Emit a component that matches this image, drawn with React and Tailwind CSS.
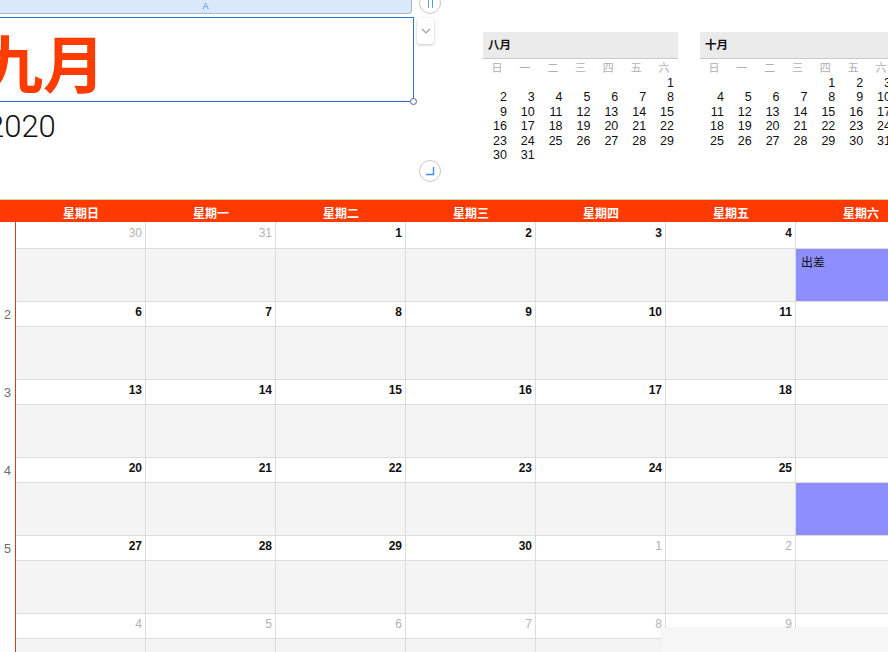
import React from 'react';

const weekdays = ['星期日', '星期一', '星期二', '星期三', '星期四', '星期五', '星期六'];
const miniHeads = ['日', '一', '二', '三', '四', '五', '六'];

// each week: [day, isOtherMonth]; null = nothing shown (saturday cells are blank)
const weeks = [
  { no: '', days: [[30, 1], [31, 1], [1], [2], [3], [4], null], event: '出差' },
  { no: '2', days: [[6], [7], [8], [9], [10], [11], null] },
  { no: '3', days: [[13], [14], [15], [16], [17], [18], null] },
  { no: '4', days: [[20], [21], [22], [23], [24], [25], null], event: '' },
  { no: '5', days: [[27], [28], [29], [30], [1, 1], [2, 1], null] },
  { no: '', days: [[4, 1], [5, 1], [6, 1], [7, 1], [8, 1], [9, 1], null] },
];

const buildMonth = (offset, count) => {
  const cells = [];
  for (let i = 0; i < offset; i++) cells.push('');
  for (let d = 1; d <= count; d++) cells.push(d);
  return cells;
};

const MiniMonth = ({ title, offset, count }) => {
  const cells = buildMonth(offset, count);
  return (
    <div className="w-[195px] shrink-0">
      <div className="h-[27px] bg-[#ebebeb] border-b border-[#c9c9c9] flex items-center pl-[5px] pt-[2px] text-[11.5px] font-semibold text-[#111]">
        {title}
      </div>
      <div className="grid grid-cols-7 mt-[3px] h-[13px] text-[11px] leading-[13px] text-[#b0b0b0]">
        {miniHeads.map((h) => (
          <div key={h} className="text-center">{h}</div>
        ))}
      </div>
      <div className="grid grid-cols-7 mt-[1px] text-[12.5px] leading-[14.4px] text-[#111]">
        {cells.map((c, i) => (
          <div key={i} className="text-right pr-[4px] h-[14.4px]">{c}</div>
        ))}
      </div>
    </div>
  );
};

const App = () => {
  return (
    <div className="relative w-[888px] h-[652px] overflow-hidden bg-white font-['Liberation_Sans','Noto_Sans_CJK_SC',sans-serif]">
      {/* top area */}
      <div className="flex h-[199px]">
        <div className="relative w-[483px] shrink-0">
          {/* tab bar */}
          <div className="h-[14px] w-[412px] bg-[#dae8fb] border-b border-r border-[#a9b7ca] rounded-br-[4px] flex items-center justify-center">
            <span className="text-[9px] leading-none text-[#4a8fe0] -mt-[1px]">A</span>
          </div>

          {/* title box */}
          <div className="mt-[3px] -ml-[18px] w-[432px] h-[85px] border border-[#2f6fcc] pt-[10px]">
            <div className="-ml-[2px] text-[62px] leading-[66px] font-bold text-[#ff3c00] font-['Noto_Sans_CJK_SC',sans-serif]">九月</div>
          </div>

          <div className="-ml-[13px] mt-[8px] text-[31px] leading-[34px] font-light text-[#111] font-['Roboto','Liberation_Sans',sans-serif]">2020</div>

          {/* handles and buttons over the canvas */}
          <div className="absolute left-[410px] top-[98px] w-[7px] h-[7px] rounded-full border border-[#4f64a0] bg-white" />
          <div className="absolute left-[419px] top-[-8px] w-[22px] h-[22px] rounded-full border border-[#c9c9c9] bg-white flex items-end justify-center gap-[3px] pb-[5px]">
            <div className="w-px h-[12px] bg-[#5b9ae8]" />
            <div className="w-px h-[12px] bg-[#5b9ae8]" />
          </div>
          <div className="absolute left-[417px] top-[18px] w-[17px] h-[26px] rounded-[3px] bg-white shadow-[0_1px_3px_rgba(0,0,0,0.25)] flex items-center justify-center">
            <svg width="10" height="6" viewBox="0 0 10 6">
              <polyline points="1,1 5,5 9,1" fill="none" stroke="#a0a0a0" strokeWidth="1.2" />
            </svg>
          </div>
          <div className="absolute left-[419px] top-[160px] w-[22px] h-[22px] rounded-full border border-[#c9c9c9] bg-white flex items-center justify-center">
            <svg width="10" height="10" viewBox="0 0 10 10">
              <polyline points="1,8.5 8.5,8.5 8.5,1" fill="none" stroke="#3d8ef0" strokeWidth="1.4" />
            </svg>
          </div>
        </div>

        <div className="flex gap-[22px] pt-[32px]">
          <MiniMonth title="八月" offset={6} count={31} />
          <MiniMonth title="十月" offset={4} count={31} />
        </div>
      </div>

      <div className="h-px bg-[#bfe3a9]" />

      {/* weekday header */}
      <div className="flex h-[22px] bg-[#ff3a00] text-white text-[12px] font-bold items-center pt-[5px]">
        <div className="w-[16px] shrink-0" />
        {weekdays.map((w) => (
          <div key={w} className="w-[130px] shrink-0 text-center">{w}</div>
        ))}
      </div>

      {/* month grid */}
      {weeks.map((week, r) => (
        <div key={r} className="flex">
          <div className="w-[16px] shrink-0 border-r border-[#d9381c]">
            <div className={`${r === 0 ? 'h-[27px]' : 'h-[25px]'} flex items-center pl-[4px] pt-[2px] text-[12.5px] text-[#6a6a6a]`}>
              {week.no}
            </div>
            <div className="h-[53px]" />
          </div>
          {week.days.map((d, c) => (
            <div key={c} className="w-[130px] shrink-0 border-r border-[#dcdcdc]">
              <div className={`${r === 0 ? 'h-[27px] pt-[4px]' : 'h-[25px] pt-[3px]'} border-b border-[#dcdcdc] bg-white text-right pr-[3px] text-[12px] leading-[15px]`}>
                {d ? (
                  <span className={d[1] ? 'text-[#b3b3b3]' : 'font-bold text-[#111]'}>{d[0]}</span>
                ) : null}
              </div>
              {c === 6 && week.event !== undefined ? (
                <div className="h-[53px] border-b border-[#dcdcdc] bg-[#8e8eff] pl-[5px] pt-[6px] text-[12px] leading-[16px] text-[#111]">
                  {week.event}
                </div>
              ) : (
                <div className="h-[53px] border-b border-[#dcdcdc] bg-[#f4f4f4]" />
              )}
            </div>
          ))}
        </div>
      ))}

      {/* bottom bar overlapping the grid */}
      <div className="absolute left-[661px] top-[628px] w-[227px] h-[24px] bg-[#f6f6f6] shadow-[0_-1px_2px_rgba(0,0,0,0.05)]" />
    </div>
  );
};

export default App;
